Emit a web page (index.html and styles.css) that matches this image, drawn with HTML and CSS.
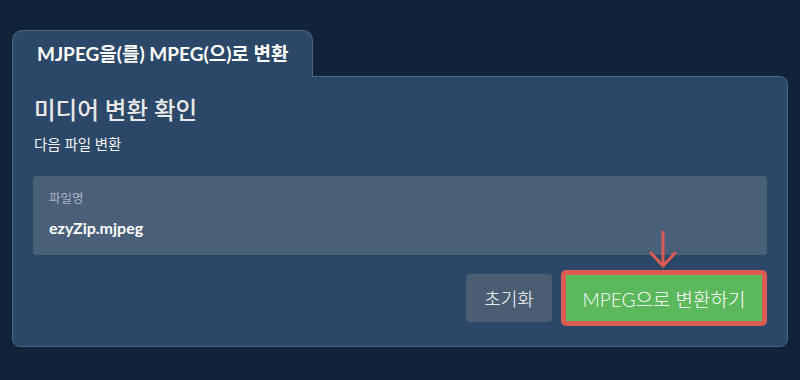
FILE: index.html
```html
<!DOCTYPE html>
<html lang="ko">
<head>
  <meta charset="UTF-8">
  <meta name="viewport" content="width=device-width, initial-scale=1.0">
  <title>MJPEG을(를) MPEG(으)로 변환</title>
  <link rel="stylesheet" href="styles.css">
</head>
<body>
  <div class="wrap">
    <div class="tab">MJPEG을(를) MPEG(으)로 변환</div>
    <div class="panel">
      <h2>미디어 변환 확인</h2>
      <p class="sub">다음 파일 변환</p>

      <div class="file-box">
        <div class="file-label">파일명</div>
        <div class="file-name">ezyZip.mjpeg</div>
      </div>

      <div class="actions">
        <button class="btn btn-reset">초기화</button>
        <div class="convert-wrap">
          <svg class="arrow" width="30" height="38" viewBox="0 0 30 38">
            <path d="M15 1 V35 M3 22 L15 35 L27 22" fill="none" stroke="#dc5b55" stroke-width="3" stroke-linecap="round" stroke-linejoin="round"/>
          </svg>
          <button class="btn btn-convert">MPEG으로 변환하기</button>
        </div>
      </div>
    </div>
  </div>
</body>
</html>
```

FILE: styles.css
```css
body {
  margin: 0;
  background: #10233a;
  font-family: 'Lato', 'Noto Sans CJK KR', sans-serif;
  color: #fff;
}
.wrap {
  padding: 30px 12px 0 12px;
}
.tab {
  display: inline-block;
  position: relative;
  z-index: 1;
  margin-bottom: -1px;
  padding: 0 24px;
  height: 46px;
  line-height: 46px;
  background: #2c4868;
  border: 1px solid #4b6583;
  border-bottom: none;
  border-radius: 10px 10px 0 0;
  font-size: 19px;
  font-weight: 700;
}
.panel {
  background: #2c4868;
  border: 1px solid #4b6583;
  border-radius: 0 8px 8px 8px;
  padding: 19px 20px 20px 21px;
}
h2 {
  margin: 0;
  font-size: 23.5px;
  font-weight: 500;
  line-height: 28px;
  color: #e8e8e8;
}
.sub {
  margin: 11px 0 0 0;
  font-size: 14.5px;
  line-height: 20px;
  color: #f2f2f2;
}
.file-box {
  margin-top: 21px;
  margin-left: -1px;
  background: #4a5f78;
  border-radius: 4px;
  padding: 14px 16px 16px 16px;
}
.file-label {
  font-size: 12.5px;
  line-height: 18px;
  color: #aab5c3;
}
.file-name {
  margin-top: 9px;
  font-size: 16px;
  font-weight: 700;
  line-height: 22px;
}
.actions {
  display: flex;
  justify-content: flex-end;
  align-items: center;
  gap: 9px;
  margin-top: 15px;
}
.btn {
  font-family: inherit;
  font-size: 18px;
  font-weight: 300;
  color: #fff;
  border: none;
  border-radius: 4px;
  cursor: pointer;
}
.btn-reset {
  width: 86px;
  height: 48px;
  background: #4b5d72;
}
.convert-wrap {
  position: relative;
}
.arrow {
  position: absolute;
  left: 50%;
  top: -39px;
  margin-left: -16px;
}
.btn-convert {
  display: block;
  width: 206px;
  height: 56px;
  font-size: 19px;
  background: #5cb85c;
  border: 5px solid #dc5b55;
  border-radius: 5px;
}
```
